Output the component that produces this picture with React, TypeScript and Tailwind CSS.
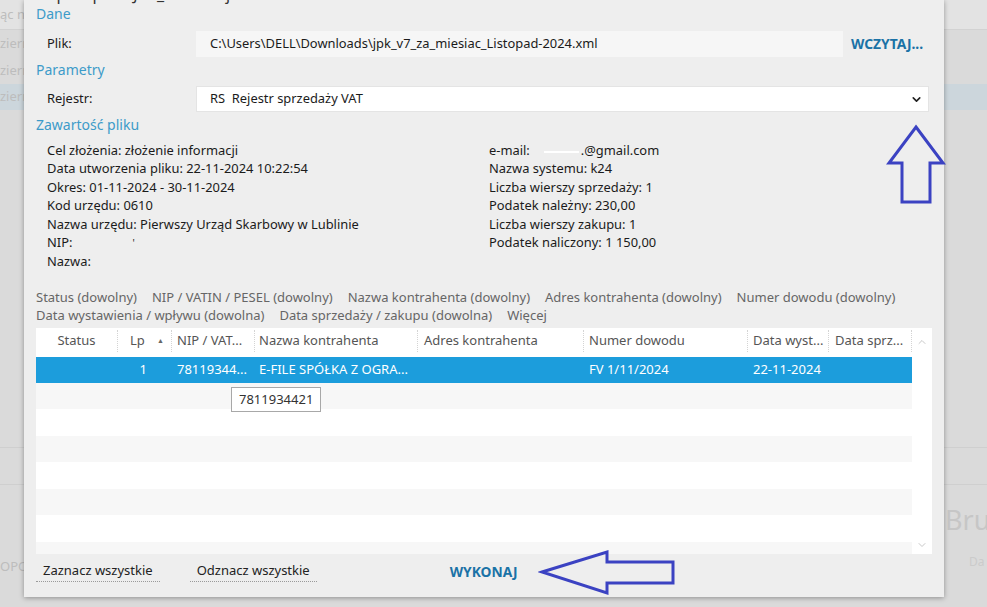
import { ChevronDown, ChevronUp } from 'lucide-react'

interface Col {
  label: string
  cls: string
  sort?: boolean
}

const cols: Col[] = [
  { label: 'Status', cls: 'w-[82px] justify-center' },
  { label: 'Lp', cls: 'w-[54px] pl-[12px]', sort: true },
  { label: 'NIP / VAT...', cls: 'w-[83px] pl-[5px]' },
  { label: 'Nazwa kontrahenta', cls: 'w-[163px] pl-[4px]' },
  { label: 'Adres kontrahenta', cls: 'w-[166px] pl-[6px]' },
  { label: 'Numer dowodu', cls: 'w-[164px] pl-[5px]' },
  { label: 'Data wyst...', cls: 'w-[81px] pl-[5px]' },
  { label: 'Data sprz...', cls: 'w-[83px] pl-[6px]' },
]

const selected = ['', '1', '78119344...', 'E-FILE SPÓŁKA Z OGRA...', '', 'FV 1/11/2024', '22-11-2024', '']
const cellCls = [
  'w-[82px]',
  'w-[54px] justify-end pr-[25px]',
  'w-[83px] pl-[5px]',
  'w-[163px] pl-[4px]',
  'w-[166px] pl-[6px]',
  'w-[164px] pl-[5px]',
  'w-[81px] pl-[5px]',
  'w-[83px] pl-[6px]',
]

const leftInfo = [
  'Cel złożenia: złożenie informacji',
  'Data utworzenia pliku: 22-11-2024 10:22:54',
  'Okres: 01-11-2024 - 30-11-2024',
  'Kod urzędu: 0610',
  'Nazwa urzędu: Pierwszy Urząd Skarbowy w Lublinie',
]

const rightInfo = [
  'Nazwa systemu: k24',
  'Liczba wierszy sprzedaży: 1',
  'Podatek należny: 230,00',
  'Liczba wierszy zakupu: 1',
  'Podatek naliczony: 1 150,00',
]

function Section({ title }: { title: string }) {
  return <div className="h-[20px] leading-[20px] text-[14px] text-[#3d9bc9]">{title}</div>
}

function BgCell({ text }: { text: string }) {
  return <div className="w-[24px] overflow-hidden whitespace-nowrap">{text}</div>
}

export default function App() {
  return (
    <div className="relative w-[987px] h-[607px] overflow-hidden bg-[#dadada] font-['Noto_Sans',sans-serif]">
      {/* application behind the dialog */}
      <div className="flex flex-col h-full text-[13px] text-[#bdbdbd]">
        <div className="h-[30px] flex items-center bg-[#e3e3e3] border-b border-[#d2d2d2]">
          <BgCell text="ąc n" />
        </div>
        <div className="h-[27px] flex items-center">
          <BgCell text="ziern" />
        </div>
        <div className="h-[27px] flex items-center">
          <BgCell text="ziern" />
        </div>
        <div className="h-[26px] flex items-center bg-[#ccd6dc]">
          <BgCell text="ziern" />
        </div>
        <div className="flex-1" />
        <div className="h-[38px] border-t border-b border-[#cfcfcf]" />
        <div className="h-[122px] flex justify-between">
          <div className="w-[24px] overflow-hidden pt-[72px] whitespace-nowrap">OPO</div>
          <div className="w-[42px] overflow-hidden flex flex-col">
            <div className="mt-[20px] text-[27px] leading-[30px] text-[#c6c6c6] whitespace-nowrap">Brut</div>
            <div className="mt-[18px] ml-[24px] text-[12px] text-[#cbcbcb]">Da</div>
          </div>
        </div>
      </div>

      {/* dialog */}
      <div className="absolute left-[24px] top-0 w-[920px] h-[597px] bg-[#eeeeee] shadow-[0_1px_5px_rgba(0,0,0,0.35)] flex flex-col px-[12px] text-[12.9px] text-[#1b1b1b]">
        <div className="h-[4px] overflow-hidden">
          <div className="-mt-[15px] text-[16px] leading-[18px] text-[#333]">Import pliku JPK_V7 do rejestrów VAT</div>
        </div>
        <Section title="Dane" />
        <div className="mt-[7px] h-[26px] flex items-center">
          <div className="w-[160px] pl-[11px]">Plik:</div>
          <div className="w-[647px] h-full flex items-center bg-[#f6f6f6] pl-[14px]">
            C:\Users\DELL\Downloads\jpk_v7_za_miesiac_Listopad-2024.xml
          </div>
          <div className="ml-[8px] font-bold text-[13.8px] text-[#1a72a6]">WCZYTAJ...</div>
        </div>
        <div className="mt-[3px]">
          <Section title="Parametry" />
        </div>
        <div className="mt-[6px] h-[26px] flex items-center">
          <div className="w-[160px] pl-[11px]">Rejestr:</div>
          <div className="w-[733px] h-full flex items-center bg-white border border-[#e4e4e4] pl-[13px] pr-[5px]">
            <span>RS&nbsp;&nbsp;Rejestr sprzedaży VAT</span>
            <ChevronDown className="ml-auto text-[#222]" size={13} strokeWidth={3} />
          </div>
        </div>
        <div className="mt-[3px]">
          <Section title="Zawartość pliku" />
        </div>
        <div className="mt-[6px] grid grid-cols-[442px_1fr] pl-[11px] leading-[18.4px]">
          <div>
            {leftInfo.map((l) => (
              <div key={l}>{l}</div>
            ))}
            <div>
              NIP:<span className="ml-[60px] text-[10px]">'</span>
            </div>
            <div>Nazwa:</div>
          </div>
          <div>
            <div className="flex items-center">
              e-mail:
              <span className="inline-block ml-[14px] w-[35px] h-[2px] bg-white mt-[4px]" />
              <span className="ml-[2px]">.@gmail.com</span>
            </div>
            {rightInfo.map((l) => (
              <div key={l}>{l}</div>
            ))}
          </div>
        </div>

        <div className="mt-[17px] leading-[18px] text-[13px] text-[#666]">
          <div className="flex gap-x-[15px] whitespace-nowrap">
            <span>Status (dowolny)</span>
            <span>NIP / VATIN / PESEL (dowolny)</span>
            <span>Nazwa kontrahenta (dowolny)</span>
            <span>Adres kontrahenta (dowolny)</span>
            <span>Numer dowodu (dowolny)</span>
          </div>
          <div className="flex gap-x-[15px] whitespace-nowrap">
            <span>Data wystawienia / wpływu (dowolna)</span>
            <span>Data sprzedaży / zakupu (dowolna)</span>
            <span>Więcej</span>
          </div>
        </div>

        {/* table */}
        <div className="mt-[4px] h-[226px] shrink-0 flex bg-white text-[13px]">
          <div className="w-[876px] flex flex-col overflow-hidden">
            <div className="h-[26px] shrink-0 flex text-[#555]">
              {cols.map((c) => (
                <div key={c.label} className={`${c.cls} mt-[2px] mb-[2px] flex items-center border-r border-dotted border-[#d4d4d4] whitespace-nowrap`}>
                  {c.label}
                  {c.sort && <span className="ml-auto mr-[7px] text-[7px] text-[#666]">▲</span>}
                </div>
              ))}
            </div>
            <div className="h-[3px] shrink-0" />
            <div className="h-[26px] shrink-0 flex bg-[#1c9ddc] text-white">
              {selected.map((v, i) => (
                <div key={i} className={`${cellCls[i]} flex items-center whitespace-nowrap`}>
                  {v}
                </div>
              ))}
            </div>
            <div className="h-[26.5px] shrink-0 bg-[#f7f7f7]" />
            <div className="h-[26.5px] shrink-0 bg-white" />
            <div className="h-[26.5px] shrink-0 bg-[#f7f7f7]" />
            <div className="h-[26.5px] shrink-0 bg-white" />
            <div className="h-[26.5px] shrink-0 bg-[#f7f7f7]" />
            <div className="h-[26.5px] shrink-0 bg-white" />
            <div className="h-[26.5px] shrink-0 bg-[#f7f7f7]" />
          </div>
          <div className="w-[20px] flex flex-col items-center justify-between pt-[8px] pb-[3px] text-[#b5b5b5]">
            <ChevronUp size={12} strokeWidth={1.5} />
            <ChevronDown size={12} strokeWidth={1.5} />
          </div>
        </div>

        {/* bottom actions */}
        <div className="flex items-start pt-[7px] text-[13px]">
          <div className="px-[7px] leading-[18px] pb-[2px] border-b border-dotted border-[#9a9a9a] text-[#222]">Zaznacz wszystkie</div>
          <div className="ml-[30px] px-[7px] leading-[18px] pb-[2px] border-b border-dotted border-[#9a9a9a] text-[#222]">Odznacz wszystkie</div>
          <div className="ml-[133px] mt-[2px] leading-[18px] font-bold text-[13.8px] text-[#1a72a6]">WYKONAJ</div>
        </div>

        {/* tooltip */}
        <div className="absolute left-[207px] top-[387px] h-[25px] px-[7px] flex items-center bg-white border border-[#a8a8a8] text-[13px] text-[#333]">
          7811934421
        </div>
      </div>

      {/* annotation arrows */}
      <svg className="absolute left-[886px] top-[124px]" width="60" height="81" viewBox="0 0 60 81" fill="none">
        <path d="M30 3 L57 39 L44 39 L44 78 L16 78 L16 39 L3 39 Z" stroke="#3b42c2" strokeWidth="3" strokeLinejoin="miter" />
      </svg>
      <svg className="absolute left-[538px] top-[548px]" width="138" height="48" viewBox="0 0 138 48" fill="none">
        <path d="M4 24 L69 4 L69 14 L135 14 L135 35 L69 35 L69 45 Z" stroke="#3b42c2" strokeWidth="3" strokeLinejoin="miter" />
      </svg>
    </div>
  )
}
